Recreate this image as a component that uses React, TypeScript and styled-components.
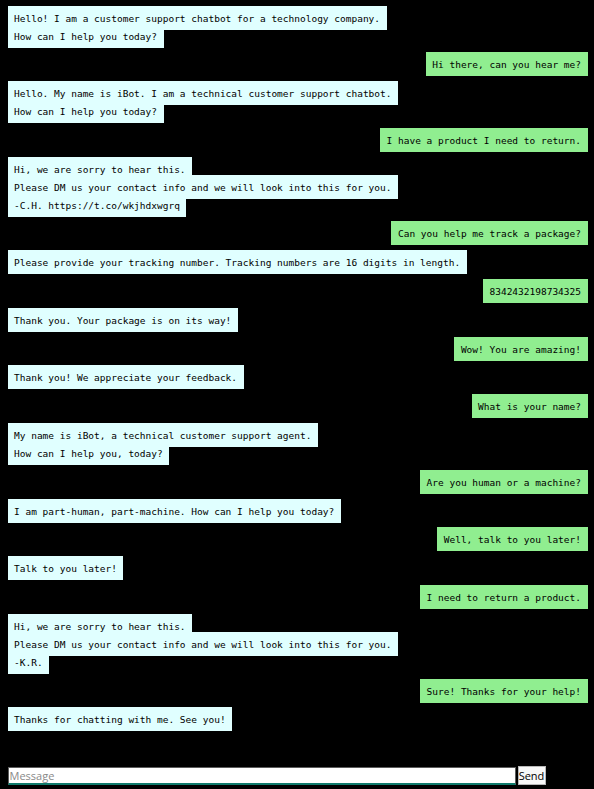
import React from 'react';
import styled, { createGlobalStyle } from 'styled-components';

const GlobalStyle = createGlobalStyle`
  html, body {
    margin: 0;
    padding: 0;
    background: #000000;
  }
  body {
    font-family: "DejaVu Sans Mono", "Liberation Mono", monospace;
  }
`;

type From = 'bot' | 'user';

const Page = styled.div`
  min-height: 100vh;
  display: flex;
  flex-direction: column;
  box-sizing: border-box;
  padding: 9px 6.5px 4px 7.5px;
`;

const Messages = styled.div`
  flex: 1;
  display: flex;
  flex-direction: column;
  gap: 10.8px;
`;

const Block = styled.div<{ $from: From }>`
  font-size: 9.5px;
  line-height: 18px;
  text-align: ${(p) => (p.$from === 'user' ? 'right' : 'left')};
  color: #000000;
`;

const Line = styled.span<{ $from: From }>`
  background: ${(p) => (p.$from === 'user' ? '#90ee90' : '#e0ffff')};
  padding: 6.5px 6.5px;
  white-space: pre;
`;

const Form = styled.form`
  display: flex;
  align-items: center;
  gap: 2px;
  margin: 0;
`;

const Input = styled.input`
  box-sizing: border-box;
  width: 508px;
  height: 18px;
  margin: 0;
  padding: 0 1px;
  border: 1px solid #5c5c5c;
  border-bottom: 2px solid #0f7b6c;
  background: #ffffff;
  font-family: "Open Sans", "Noto Sans", sans-serif;
  font-size: 11px;
  outline: none;
  &::placeholder {
    color: #8a8a8a;
  }
`;

const SendButton = styled.button`
  box-sizing: border-box;
  height: 19px;
  width: 28px;
  margin: 0;
  padding: 0;
  border: 1px solid #b8b8b8;
  background: #f7f7f7;
  color: #000000;
  font-family: "Open Sans", "Noto Sans", sans-serif;
  font-size: 11px;
  line-height: 1;
`;

const messages: { from: From; lines: string[] }[] = [
  { from: 'bot', lines: ['Hello! I am a customer support chatbot for a technology company.', 'How can I help you today?'] },
  { from: 'user', lines: ['Hi there, can you hear me?'] },
  { from: 'bot', lines: ['Hello. My name is iBot. I am a technical customer support chatbot.', 'How can I help you today?'] },
  { from: 'user', lines: ['I have a product I need to return.'] },
  { from: 'bot', lines: ['Hi, we are sorry to hear this.', 'Please DM us your contact info and we will look into this for you.', '-C.H. https://t.co/wkjhdxwgrq'] },
  { from: 'user', lines: ['Can you help me track a package?'] },
  { from: 'bot', lines: ['Please provide your tracking number. Tracking numbers are 16 digits in length.'] },
  { from: 'user', lines: ['8342432198734325'] },
  { from: 'bot', lines: ['Thank you. Your package is on its way!'] },
  { from: 'user', lines: ['Wow! You are amazing!'] },
  { from: 'bot', lines: ['Thank you! We appreciate your feedback.'] },
  { from: 'user', lines: ['What is your name?'] },
  { from: 'bot', lines: ['My name is iBot, a technical customer support agent.', 'How can I help you, today?'] },
  { from: 'user', lines: ['Are you human or a machine?'] },
  { from: 'bot', lines: ['I am part-human, part-machine. How can I help you today?'] },
  { from: 'user', lines: ['Well, talk to you later!'] },
  { from: 'bot', lines: ['Talk to you later!'] },
  { from: 'user', lines: ['I need to return a product.'] },
  { from: 'bot', lines: ['Hi, we are sorry to hear this.', 'Please DM us your contact info and we will look into this for you.', '-K.R.'] },
  { from: 'user', lines: ['Sure! Thanks for your help!'] },
  { from: 'bot', lines: ['Thanks for chatting with me. See you!'] },
];

export default function App() {
  return (
    <>
      <GlobalStyle />
      <Page>
        <Messages>
          {messages.map((m, i) => (
            <Block key={i} $from={m.from}>
              {m.lines.map((l, j) => (
                <React.Fragment key={j}>
                  {j > 0 && <br />}
                  <Line $from={m.from}>{l}</Line>
                </React.Fragment>
              ))}
            </Block>
          ))}
        </Messages>
        <Form onSubmit={(e) => e.preventDefault()}>
          <Input type="text" placeholder="Message" />
          <SendButton type="submit">Send</SendButton>
        </Form>
      </Page>
    </>
  );
}
